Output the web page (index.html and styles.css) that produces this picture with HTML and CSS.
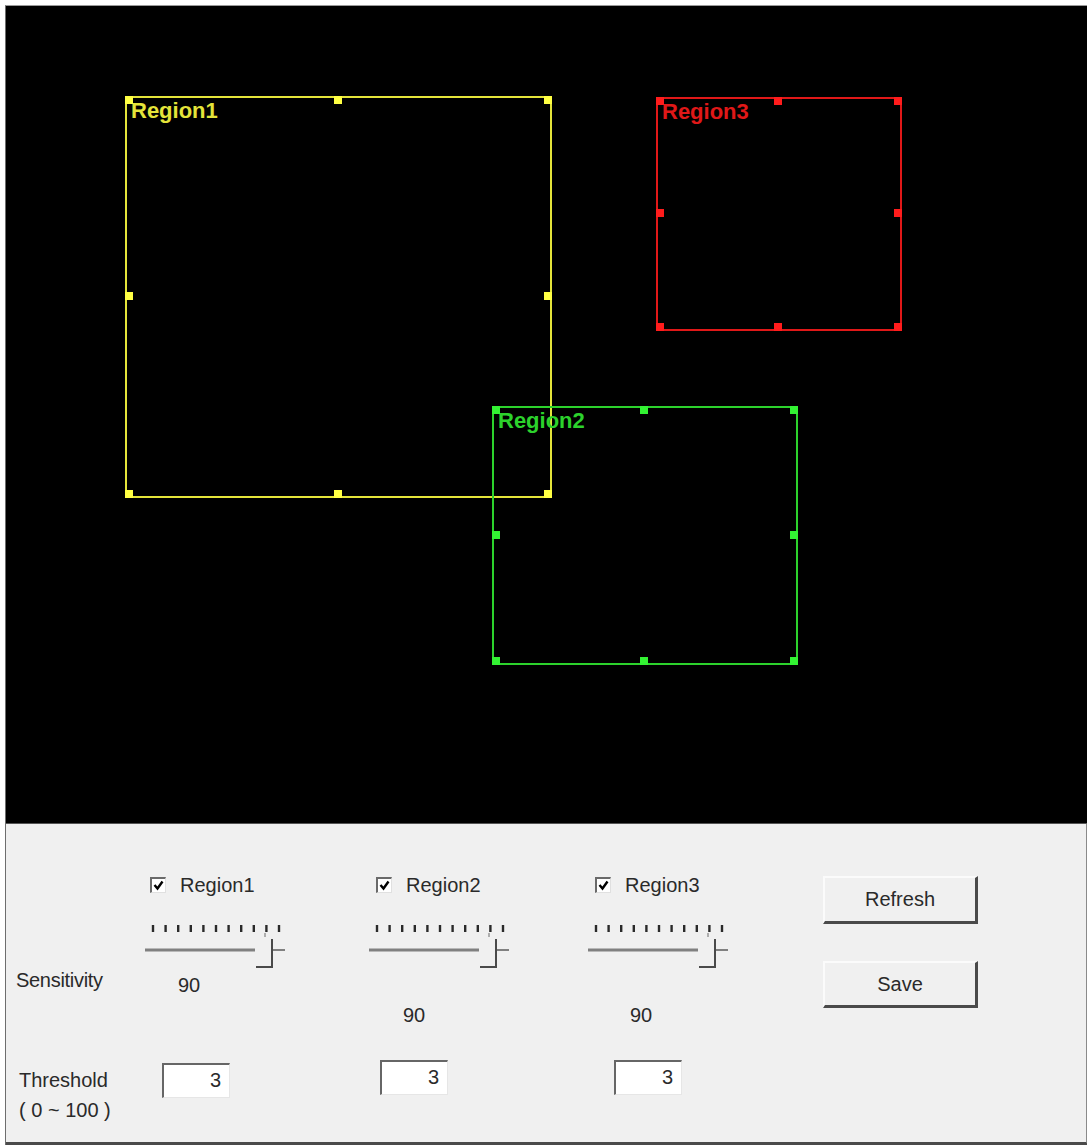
FILE: index.html
```html
<!DOCTYPE html>
<html>
<head>
<meta charset="utf-8">
<link rel="stylesheet" href="styles.css">
</head>
<body>
<div class="window">
  <div class="canvas">
    <div class="region r1">
      <span class="rlabel">Region1</span>
      <i class="h tl"></i><i class="h tm"></i><i class="h tr"></i>
      <i class="h ml"></i><i class="h mr"></i>
      <i class="h bl"></i><i class="h bm"></i><i class="h br"></i>
    </div>
    <div class="region r3">
      <span class="rlabel">Region3</span>
      <i class="h tl"></i><i class="h tm"></i><i class="h tr"></i>
      <i class="h ml"></i><i class="h mr"></i>
      <i class="h bl"></i><i class="h bm"></i><i class="h br"></i>
    </div>
    <div class="region r2">
      <span class="rlabel">Region2</span>
      <i class="h tl"></i><i class="h tm"></i><i class="h tr"></i>
      <i class="h ml"></i><i class="h mr"></i>
      <i class="h bl"></i><i class="h bm"></i><i class="h br"></i>
    </div>
  </div>
  <div class="panel">
    <div class="labels">
      <div class="lbl sens">Sensitivity</div>
      <div class="lbl thr">Threshold</div>
      <div class="lbl range">( 0 ~ 100 )</div>
    </div>

    <div class="col c1">
      <label class="check"><span class="cb"><svg width="11" height="11" viewBox="0 0 11 11"><path d="M1.5 5 L4.5 8.5 L9.5 1.5" fill="none" stroke="#000" stroke-width="2.4"/></svg></span>Region1</label>
      <svg class="slider" width="145" height="48" viewBox="0 0 145 48">
        <g stroke="#2a2a2a" stroke-width="2.4">
          <line x1="8" y1="3" x2="8" y2="10"/><line x1="20.6" y1="3" x2="20.6" y2="10"/><line x1="33.2" y1="3" x2="33.2" y2="10"/><line x1="45.8" y1="3" x2="45.8" y2="10"/><line x1="58.4" y1="3" x2="58.4" y2="10"/><line x1="71" y1="3" x2="71" y2="10"/><line x1="83.6" y1="3" x2="83.6" y2="10"/><line x1="96.2" y1="3" x2="96.2" y2="10"/><line x1="108.8" y1="3" x2="108.8" y2="10"/><line x1="121.4" y1="3" x2="121.4" y2="10"/><line x1="134" y1="3" x2="134" y2="10"/>
        </g>
        <line x1="120" y1="11" x2="120" y2="15" stroke="#999" stroke-width="1.5"/>
        <line x1="0" y1="28" x2="110" y2="28" stroke="#808080" stroke-width="3"/>
        <line x1="128" y1="28" x2="140" y2="28" stroke="#808080" stroke-width="2"/>
        <path d="M127 17 V45 H111" fill="none" stroke="#4a4a4a" stroke-width="2"/>
      </svg>
      <div class="value">90</div>
      <div class="tb">3</div>
    </div>

    <div class="col c2">
      <label class="check"><span class="cb"><svg width="11" height="11" viewBox="0 0 11 11"><path d="M1.5 5 L4.5 8.5 L9.5 1.5" fill="none" stroke="#000" stroke-width="2.4"/></svg></span>Region2</label>
      <svg class="slider" width="145" height="48" viewBox="0 0 145 48">
        <g stroke="#2a2a2a" stroke-width="2.4">
          <line x1="8" y1="3" x2="8" y2="10"/><line x1="20.6" y1="3" x2="20.6" y2="10"/><line x1="33.2" y1="3" x2="33.2" y2="10"/><line x1="45.8" y1="3" x2="45.8" y2="10"/><line x1="58.4" y1="3" x2="58.4" y2="10"/><line x1="71" y1="3" x2="71" y2="10"/><line x1="83.6" y1="3" x2="83.6" y2="10"/><line x1="96.2" y1="3" x2="96.2" y2="10"/><line x1="108.8" y1="3" x2="108.8" y2="10"/><line x1="121.4" y1="3" x2="121.4" y2="10"/><line x1="134" y1="3" x2="134" y2="10"/>
        </g>
        <line x1="120" y1="11" x2="120" y2="15" stroke="#999" stroke-width="1.5"/>
        <line x1="0" y1="28" x2="110" y2="28" stroke="#808080" stroke-width="3"/>
        <line x1="128" y1="28" x2="140" y2="28" stroke="#808080" stroke-width="2"/>
        <path d="M127 17 V45 H111" fill="none" stroke="#4a4a4a" stroke-width="2"/>
      </svg>
      <div class="value">90</div>
      <div class="tb">3</div>
    </div>

    <div class="col c3">
      <label class="check"><span class="cb"><svg width="11" height="11" viewBox="0 0 11 11"><path d="M1.5 5 L4.5 8.5 L9.5 1.5" fill="none" stroke="#000" stroke-width="2.4"/></svg></span>Region3</label>
      <svg class="slider" width="145" height="48" viewBox="0 0 145 48">
        <g stroke="#2a2a2a" stroke-width="2.4">
          <line x1="8" y1="3" x2="8" y2="10"/><line x1="20.6" y1="3" x2="20.6" y2="10"/><line x1="33.2" y1="3" x2="33.2" y2="10"/><line x1="45.8" y1="3" x2="45.8" y2="10"/><line x1="58.4" y1="3" x2="58.4" y2="10"/><line x1="71" y1="3" x2="71" y2="10"/><line x1="83.6" y1="3" x2="83.6" y2="10"/><line x1="96.2" y1="3" x2="96.2" y2="10"/><line x1="108.8" y1="3" x2="108.8" y2="10"/><line x1="121.4" y1="3" x2="121.4" y2="10"/><line x1="134" y1="3" x2="134" y2="10"/>
        </g>
        <line x1="120" y1="11" x2="120" y2="15" stroke="#999" stroke-width="1.5"/>
        <line x1="0" y1="28" x2="110" y2="28" stroke="#808080" stroke-width="3"/>
        <line x1="128" y1="28" x2="140" y2="28" stroke="#808080" stroke-width="2"/>
        <path d="M127 17 V45 H111" fill="none" stroke="#4a4a4a" stroke-width="2"/>
      </svg>
      <div class="value">90</div>
      <div class="tb">3</div>
    </div>

    <div class="buttons">
      <button class="btn refresh">Refresh</button>
      <button class="btn save">Save</button>
    </div>
  </div>
</div>
</body>
</html>
```

FILE: styles.css
```css
html, body {
  margin: 0;
  padding: 0;
  background: #ffffff;
}

.window {
  margin: 5px 0 0 5px;
  width: 1082px;
  border-left: 1px solid #6e6e6e;
  border-top: 1px solid #9a9a9a;
}

.canvas {
  position: relative;
  height: 817px;
  background: #000;
}

.region {
  position: absolute;
  box-sizing: border-box;
  border: 2px solid currentColor;
}

.r1 { left: 119px; top: 90px; width: 427px; height: 402px; color: #e4e43a; }
.r3 { left: 650px; top: 91px; width: 246px; height: 234px; color: #e01818; }
.r2 { left: 486px; top: 400px; width: 306px; height: 259px; color: #2cd22c; }

.rlabel {
  position: absolute;
  left: 4px;
  top: 2px;
  font-family: "Liberation Sans", Arial, sans-serif;
  font-weight: bold;
  font-size: 22px;
  line-height: 22px;
  color: currentColor;
  white-space: nowrap;
}

.h {
  position: absolute;
  width: 8px;
  height: 8px;
  background: currentColor;
  filter: brightness(1.15);
}
.tl { left: -2px; top: -2px; }
.tm { left: calc(50% - 5px); top: -2px; }
.tr { right: -2px; top: -2px; }
.ml { left: -2px; top: calc(50% - 5px); }
.mr { right: -2px; top: calc(50% - 5px); }
.bl { left: -2px; bottom: -2px; }
.bm { left: calc(50% - 5px); bottom: -2px; }
.br { right: -2px; bottom: -2px; }

.panel {
  box-sizing: border-box;
  height: 322px;
  background: #f0f0f0;
  border-top: 1px solid #555;
  border-right: 2px solid #8a8a8a;
  border-bottom: 3px solid #4a4a4a;
  display: grid;
  grid-template-columns: 139px 224px 219px 235px 155px 1fr;
  font-family: "Liberation Sans", Arial, sans-serif;
  font-size: 20px;
  color: #2a2a2a;
}

.labels {
  display: flex;
  flex-direction: column;
  padding-left: 10px;
  padding-top: 145px;
}

.lbl {
  line-height: 22px;
  white-space: nowrap;
}
.sens { letter-spacing: -0.3px; }
.thr { margin-top: 78px; margin-left: 3px; }
.range { margin-top: 8px; margin-left: 3px; }

.col {
  display: flex;
  flex-direction: column;
  align-items: flex-start;
  padding-top: 50px;
}

.check {
  display: flex;
  align-items: center;
  height: 22px;
  margin-left: 5px;
  white-space: nowrap;
}

.cb {
  box-sizing: border-box;
  width: 16px;
  height: 16px;
  margin-right: 14px;
  background: #fff;
  border-top: 2px solid #6a6a6a;
  border-left: 2px solid #6a6a6a;
  border-right: 1px solid #e0e0e0;
  border-bottom: 1px solid #e0e0e0;
  display: flex;
  align-items: center;
  justify-content: center;
}

.slider {
  display: block;
  margin-top: 26px;
}

.value {
  line-height: 22px;
}

.tb {
  box-sizing: border-box;
  width: 68px;
  height: 35px;
  background: #fff;
  border-top: 2px solid #666;
  border-left: 2px solid #666;
  border-right: 1px solid #e6e6e6;
  border-bottom: 1px solid #e6e6e6;
  text-align: right;
  padding-right: 8px;
  line-height: 30px;
}

.c1 .value { margin-top: 4px; margin-left: 33px; }
.c1 .tb { margin-top: 67px; margin-left: 17px; }

.c2 .check { margin-left: 7px; }
.c2 .value { margin-top: 34px; margin-left: 34px; }
.c2 .tb { margin-top: 34px; margin-left: 11px; }

.c3 .check { margin-left: 7px; }
.c3 .value { margin-top: 34px; margin-left: 42px; }
.c3 .tb { margin-top: 34px; margin-left: 26px; }

.buttons {
  display: flex;
  flex-direction: column;
  padding-top: 52px;
}

.btn {
  box-sizing: border-box;
  width: 155px;
  height: 48px;
  padding: 0;
  background: #f0f0f0;
  border-top: 2px solid #fbfbfb;
  border-left: 2px solid #fbfbfb;
  border-right: 3px solid #4a4a4a;
  border-bottom: 3px solid #4a4a4a;
  font-family: "Liberation Sans", Arial, sans-serif;
  font-size: 20px;
  color: #2a2a2a;
}

.save {
  margin-top: 37px;
  height: 47px;
}
```
